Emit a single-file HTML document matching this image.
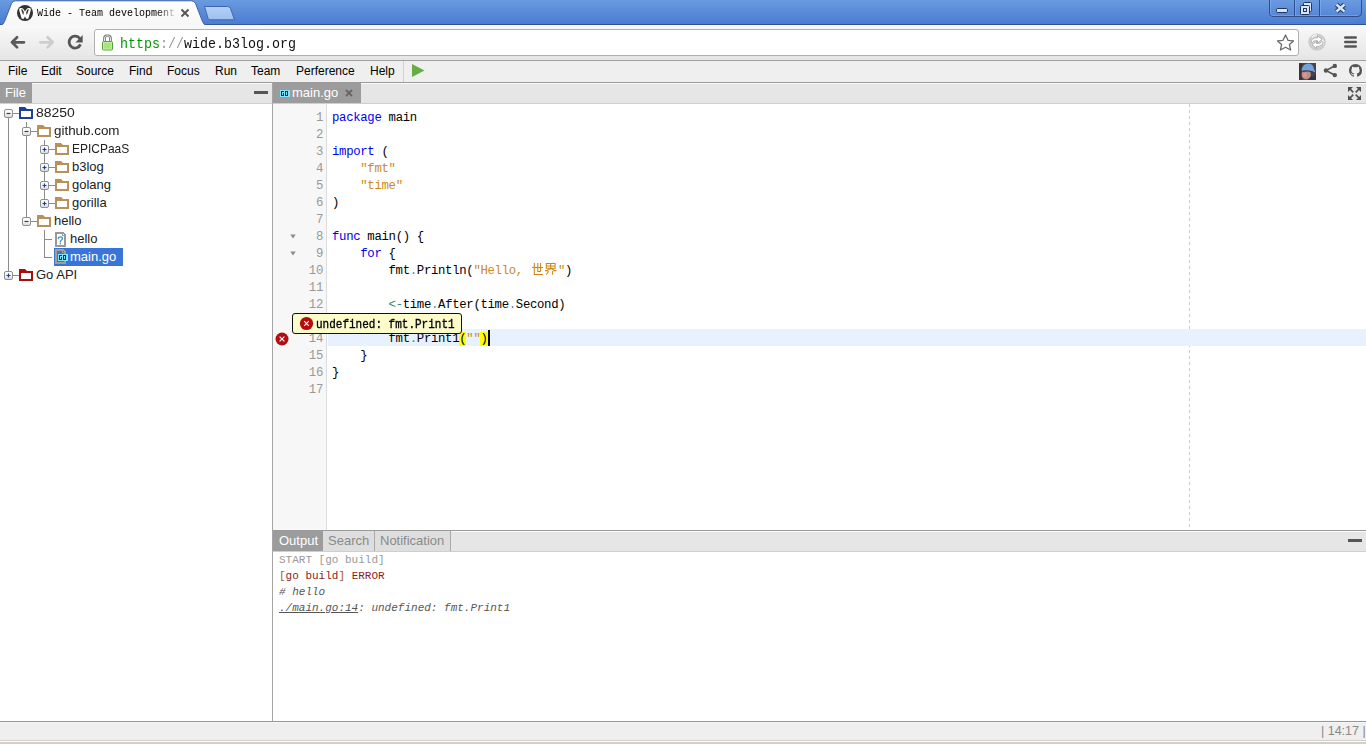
<!DOCTYPE html>
<html><head><meta charset="utf-8">
<style>
*{margin:0;padding:0;box-sizing:border-box}
html,body{width:1366px;height:744px;overflow:hidden;background:#fff;font-family:"Liberation Sans",sans-serif;position:relative}
.a{position:absolute}
#titlebar{left:0;top:0;width:1366px;height:25px;background:linear-gradient(#6a9ae0,#4b7dd2);border-bottom:1px solid #2d5193}
#toolbar{left:0;top:25px;width:1366px;height:36px;background:linear-gradient(#f9f9f9,#e5e5e5);border-bottom:1px solid #a0a0a0}
#omni{left:94px;top:29px;width:1205px;height:27px;background:#fff;border:1px solid #b0b0b0;border-radius:3px}
#menubar{left:0;top:61px;width:1366px;height:21px;background:#efefef}
.mi{top:65px;font-size:12px;color:#000;line-height:13px}
#sidebar{left:0;top:82px;width:272px;height:639px;background:#fff;border-top:1px solid #9b9b9b}
#vsplit{left:272px;top:82px;width:1px;height:640px;background:#a5a5a5}
.hdr{background:#e6e6e6;border-top:1px solid #fafafa;border-bottom:1px solid #cfcfcf}
.tree{font-size:13px;color:#222;line-height:15px}
.code{font-family:"Liberation Mono",monospace;font-size:12.3px;letter-spacing:-0.31px;line-height:17px;white-space:pre}
.ln{font-family:"Liberation Mono",monospace;font-size:12.3px;letter-spacing:-0.31px;line-height:17px;color:#999;text-align:right;width:40px;left:283px}
.kw{color:#0000f0}.st{color:#c98a1a}.dt{color:#3a9a9a}.op{color:#2e8b57}.br{color:#000}.cjk{display:inline-block;width:28px}
.out{font-family:"Liberation Mono",monospace;font-size:11px;line-height:16px;white-space:pre}
#status{left:0;top:721px;width:1366px;height:23px;background:linear-gradient(#979797 0 1px,#f6f6f6 1px 2px,#efefef 2px 19px,#d4d0c8 19px 20px,#fff 20px 21px,#d4d0c8 21px)}
</style></head><body>
<!-- TITLEBAR -->
<div id="titlebar" class="a"></div>
<svg class="a" style="left:0;top:0" width="260" height="26">
 <defs><linearGradient id="tg" x1="0" y1="0" x2="0" y2="1"><stop offset="0" stop-color="#ffffff"/><stop offset="1" stop-color="#f6f6f6"/></linearGradient>
 <linearGradient id="nt" x1="0" y1="0" x2="0" y2="1"><stop offset="0" stop-color="#b3d0f6"/><stop offset="1" stop-color="#9ec0ee"/></linearGradient></defs>
 <path d="M0,25 L1.5,25 Q3.5,24.2 4.5,21.5 L11.5,3.5 Q12.8,0.8 15.5,0.8 L191.5,0.8 Q194.2,0.8 195.5,3.5 L202.5,21.5 Q203.5,24.2 205.5,25 L260,25" fill="url(#tg)" stroke="#3d62a6" stroke-width="1"/>
 <path d="M204.5,6.5 L227.5,6.5 Q229.5,6.5 230.5,8.5 L234.5,19.8 L210,19.8 Q208.6,19.8 208,18.3 Z" fill="url(#nt)" stroke="#3e68b6" stroke-width="1"/>
</svg>
<div class="a" style="left:0;top:25px;width:1366px;height:1px;background:#fff"></div>
<!-- favicon -->
<svg class="a" style="left:16px;top:4px" width="18" height="18" viewBox="0 0 18 18">
 <circle cx="9" cy="9" r="8" fill="#333"/>
 <path d="M3.1,5.8 C3,3.5 6.3,3.3 7.4,5.1 L9,7.4 L10.6,5.1 C11.7,3.3 15,3.5 14.9,5.8 L12.3,14.7 L10.1,14.7 L9,12.3 L7.9,14.7 L5.7,14.7 Z" fill="#fff"/>
 <path d="M5.2,5.7 C5.6,5.1 6.4,5.2 6.8,6 L7.9,8.3 L7.2,11.2 Z M12.8,5.7 C12.4,5.1 11.6,5.2 11.2,6 L10.1,8.3 L10.8,11.2 Z" fill="#333"/>
</svg>
<div class="a" style="left:37px;top:6px;font-family:'Liberation Mono',monospace;font-size:10px;line-height:13px;color:#000;white-space:pre;transform:scaleY(1.15);transform-origin:0 0;-webkit-mask-image:linear-gradient(90deg,#000 120px,transparent 141px);width:142px;overflow:hidden;">Wide - Team development</div>
<svg class="a" style="left:180px;top:8px" width="10" height="10" viewBox="0 0 10 10"><path d="M1.5,1.5 L8.5,8.5 M8.5,1.5 L1.5,8.5" stroke="#555" stroke-width="1.9"/></svg>
<!-- window controls -->
<svg class="a" style="left:1268px;top:0" width="96" height="19" viewBox="0 0 96 19">
 <path d="M1.5,0 L1.5,13 Q1.5,16.5 5,16.5 L90,16.5 Q93.5,16.5 93.5,13 L93.5,0" fill="none" stroke="#2e4f8c" stroke-width="1"/>
 <path d="M2.5,0 L2.5,13 Q2.5,15.5 5,15.5 L90,15.5" fill="none" stroke="#8fb3ea" stroke-width="1" opacity=".5"/>
 <line x1="26.5" y1="0" x2="26.5" y2="16" stroke="#2e4f8c"/>
 <line x1="27.5" y1="0" x2="27.5" y2="16" stroke="#8fb3ea" opacity=".5"/>
 <line x1="51.5" y1="0" x2="51.5" y2="16" stroke="#2e4f8c"/>
 <line x1="52.5" y1="0" x2="52.5" y2="16" stroke="#8fb3ea" opacity=".5"/>
 <rect x="8.5" y="8.5" width="11" height="4" rx="1.2" fill="#d8e4f8" stroke="#1e3560"/>
 <rect x="35.5" y="2.5" width="8" height="9" rx="1" fill="#d8e4f8" stroke="#1e3560"/>
 <rect x="32.5" y="5.5" width="9" height="9" rx="1" fill="#d8e4f8" stroke="#1e3560"/>
 <rect x="35.5" y="8.5" width="3" height="3" fill="#d8e4f8" stroke="#1e3560"/>
 <path d="M68.5,4.5 L76.5,11.5 M76.5,4.5 L68.5,11.5" stroke="#1e3560" stroke-width="4.4"/>
 <path d="M68.5,4.5 L76.5,11.5 M76.5,4.5 L68.5,11.5" stroke="#d8e4f8" stroke-width="2.4"/>
</svg>

<!-- TOOLBAR -->
<div id="toolbar" class="a"></div>
<div id="omni" class="a"></div>
<!-- back/fwd/reload -->
<svg class="a" style="left:9px;top:34px" width="18" height="17" viewBox="0 0 18 17">
 <path d="M15,8.3 L3.2,8.3 M8.1,3.2 L3,8.3 L8.1,13.4" fill="none" stroke="#5a5a5a" stroke-width="2.7" stroke-linecap="round" stroke-linejoin="round"/>
</svg>
<svg class="a" style="left:38px;top:34px" width="18" height="17" viewBox="0 0 18 17">
 <path d="M2.4,8.3 L14.6,8.3 M9.6,3.2 L14.7,8.3 L9.6,13.4" fill="none" stroke="#cdcdcd" stroke-width="2.7" stroke-linecap="round" stroke-linejoin="round"/>
</svg>
<svg class="a" style="left:66px;top:33px" width="19" height="18" viewBox="0 0 19 18">
 <path d="M13.8,5.6 A5.9,5.9 0 1 0 14.5,11.4" fill="none" stroke="#555" stroke-width="2.8"/>
 <path d="M16.7,2 L16.7,9.4 L9.4,9.4 Z" fill="#555"/>
</svg>
<!-- lock -->
<svg class="a" style="left:101px;top:34px" width="14" height="17" viewBox="0 0 14 17">
 <path d="M3.5,7.5 L3.5,4.2 Q3.5,1.8 5.9,1.8 L7.1,1.8 Q9.5,1.8 9.5,4.2 L9.5,7.5" fill="none" stroke="#6a6a6a" stroke-width="2.6"/>
 <path d="M3.5,7.5 L3.5,4.2 Q3.5,1.8 5.9,1.8 L7.1,1.8 Q9.5,1.8 9.5,4.2 L9.5,7.5" fill="none" stroke="#fff" stroke-width="0.9"/>
 <rect x="1.5" y="7.5" width="10" height="8.5" rx="1" fill="#a8e47e" stroke="#5c9e3c"/>
 <rect x="2.5" y="8.5" width="8" height="6.5" fill="none" stroke="#c4f3a4" stroke-width=".8"/>
</svg>
<div class="a" style="left:120px;top:36.5px;font-family:'Liberation Mono',monospace;font-size:13.33px;line-height:14px;white-space:pre;color:#111;transform:scaleY(1.12);transform-origin:0 0"><span style="color:#009900">https</span><span style="color:#999">://</span>wide.b3log.org</div>
<!-- star -->
<svg class="a" style="left:1275px;top:33px" width="21" height="19" viewBox="0 0 21 19">
 <path d="M10.5,2 L13,7.3 L18.5,7.9 L14.4,11.6 L15.6,17 L10.5,14.2 L5.4,17 L6.6,11.6 L2.5,7.9 L8,7.3 Z" fill="#fff" stroke="#6a6a6a" stroke-width="1.3" stroke-linejoin="round"/>
</svg>
<!-- extension -->
<svg class="a" style="left:1307px;top:32px" width="20" height="20" viewBox="0 0 20 20">
 <defs><radialGradient id="eg" cx=".5" cy=".5" r=".55"><stop offset="0" stop-color="#d8d8d8"/><stop offset=".8" stop-color="#cfcfcf"/><stop offset="1" stop-color="#a8a8a8"/></radialGradient></defs>
 <circle cx="10" cy="10" r="8.6" fill="url(#eg)"/>
 <path d="M4.2,5 Q6,2.2 10,2 L10,4 Q7,4.3 5.5,6.5 Z" fill="#f4f4f4" opacity=".8"/>
 <path d="M15.5,6.5 Q17.5,9 16.8,12.5 L14.5,11 Z" fill="#f8f8f8"/>
 <path d="M3.8,10.2 Q4.5,6.2 8.5,5.8 L10.5,5.8 L10.5,3.6 L15,7.4 L10.5,11 L10.5,8.7 L8.5,8.7 Q6.2,8.8 5.2,10.6 Z" fill="#fff" stroke="#9c9c9c" stroke-width=".7" stroke-linejoin="round"/>
 <path d="M16.2,10.2 Q15.5,14 11.5,14.4 L9.5,14.4 L9.5,16.6 L5,12.8 L9.5,9.2 L9.5,11.5 L11.5,11.5 Q13.8,11.4 14.8,9.6 Z" fill="#fff" stroke="#9c9c9c" stroke-width=".7" stroke-linejoin="round"/>
</svg>
<!-- menu -->
<svg class="a" style="left:1342px;top:34px" width="17" height="16" viewBox="0 0 17 16">
 <path d="M3.3,3.5 L13.7,3.5 M3.3,8 L13.7,8 M3.3,12.5 L13.7,12.5" stroke="#555" stroke-width="2.6" stroke-linecap="round"/>
</svg>

<!-- MENUBAR -->
<div id="menubar" class="a"></div>
<div class="a" style="left:0;top:82px;width:1366px;height:1px;background:#9b9b9b"></div>
<div class="a mi" style="left:8px">File</div>
<div class="a mi" style="left:41px">Edit</div>
<div class="a mi" style="left:76px">Source</div>
<div class="a mi" style="left:129px">Find</div>
<div class="a mi" style="left:167px">Focus</div>
<div class="a mi" style="left:215px">Run</div>
<div class="a mi" style="left:251px">Team</div>
<div class="a mi" style="left:296px">Perference</div>
<div class="a mi" style="left:370px">Help</div>
<div class="a" style="left:403px;top:61px;width:1px;height:21px;background:#d0d0d0"></div>
<svg class="a" style="left:411px;top:63px" width="15" height="15" viewBox="0 0 15 15"><path d="M1,1 L13.5,7.5 L1,14 Z" fill="#69ab45"/></svg>
<!-- avatar -->
<svg class="a" style="left:1299px;top:63px" width="17" height="17" viewBox="0 0 17 17">
 <rect width="17" height="17" fill="#4a4244"/>
 <rect x="0" y="0" width="3" height="17" fill="#3a3436"/>
 <path d="M9,17 L17,17 L17,11 Q14,15 9,14 Z" fill="#2e3450"/>
 <ellipse cx="7.2" cy="11.5" rx="4.6" ry="5" fill="#c08c84"/>
 <ellipse cx="6" cy="12" rx="2" ry="2.5" fill="#d6a29a" opacity=".7"/>
 <path d="M2.5,6.5 Q4,0.8 9.5,0.6 Q14,0.8 14.8,5.5 L16.5,9.5 Q11,6.8 3,8.2 Z" fill="#72a2da"/>
 <path d="M2.8,7.8 Q10,6.3 16.3,9.6 L15.5,10 Q10,7.6 4,9 Z" fill="#3c3c4a"/>
</svg>
<!-- share -->
<svg class="a" style="left:1323px;top:63px" width="15" height="15" viewBox="0 0 15 15">
 <path d="M11.5,3 L3,7.5 L11.5,12" fill="none" stroke="#555" stroke-width="1.5"/>
 <circle cx="11.8" cy="2.9" r="2.2" fill="#555"/><circle cx="2.9" cy="7.5" r="2.2" fill="#555"/><circle cx="11.8" cy="12.1" r="2.2" fill="#555"/>
</svg>
<!-- github -->
<svg class="a" style="left:1349px;top:63.5px" width="13" height="13" viewBox="0 0 16 16">
 <path fill="#555" d="M8 0C3.58 0 0 3.58 0 8c0 3.54 2.29 6.53 5.47 7.59.4.07.55-.17.55-.38 0-.19-.01-.82-.01-1.49-2.01.37-2.53-.49-2.69-.94-.09-.23-.48-.94-.82-1.130-.28-.15-.68-.52-.01-.53.63-.01 1.08.58 1.23.82.72 1.21 1.87.87 2.33.66.07-.52.28-.87.51-1.07-1.78-.2-3.64-.89-3.64-3.950 0-.87.31-1.590.82-2.15-.08-.2-.36-1.02.08-2.12 0 0 .67-.21 2.2.82.64-.18 1.32-.27 2-.27.68 0 1.36.09 2 .27 1.53-1.04 2.2-.82 2.2-.82.44 1.1.16 1.92.08 2.12.51.56.82 1.27.82 2.15 0 3.07-1.87 3.75-3.65 3.95.29.25.54.73.54 1.48 0 1.07-.01 1.93-.01 2.2 0 .21.15.46.55.38A8.013 8.013 0 0016 8c0-4.42-3.58-8-8-8z"/>
</svg>

<div id="sidebar" class="a"></div>
<div id="vsplit" class="a"></div>
<!-- sidebar header -->
<div class="a hdr" style="left:0;top:83px;width:272px;height:21px"></div>
<div class="a" style="left:0;top:83px;width:32px;height:20px;background:#9c9c9c"></div>
<div class="a" style="left:5px;top:86px;font-size:13px;line-height:14px;color:#fff">File</div>
<div class="a" style="left:254px;top:91px;width:14px;height:3px;background:#555"></div>
<!-- tree -->
<div class="a" style="left:8px;top:118px;width:1px;height:153px;background:#8c8c8c"></div>
<div class="a" style="left:26px;top:122px;width:1px;height:5px;background:#8c8c8c"></div>
<div class="a" style="left:26px;top:136px;width:1px;height:81px;background:#8c8c8c"></div>
<div class="a" style="left:44px;top:140px;width:1px;height:59px;background:#8c8c8c"></div>
<div class="a" style="left:44px;top:230px;width:1px;height:28px;background:#8c8c8c"></div>
<div class="a" style="left:45px;top:239px;width:7px;height:1px;background:#8c8c8c"></div>
<div class="a" style="left:45px;top:257px;width:7px;height:1px;background:#8c8c8c"></div>
<div class="a" style="left:13px;top:113px;width:6px;height:1px;background:#8c8c8c"></div>
<svg class="a" style="left:4px;top:109px" width="9" height="9" viewBox="0 0 9 9"><defs><linearGradient id="bx" x1="0" y1="0" x2="0" y2="1"><stop offset="0" stop-color="#fff"/><stop offset=".55" stop-color="#f4f4f4"/><stop offset="1" stop-color="#d6d6d6"/></linearGradient></defs><rect x=".5" y=".5" width="8" height="8" rx="1.5" fill="url(#bx)" stroke="#8f8f8f"/><path d="M2.5,4.5 L6.5,4.5" stroke="#1d3f94" stroke-width="1.2"/></svg>
<svg class="a" style="left:19px;top:107px" width="14" height="12" viewBox="0 0 14 12"><path d="M0,0 L6,0 L8,2 L14,2 L14,12 L0,12 Z M2,4 L2,10 L12,10 L12,4 Z" fill="#1b4096" fill-rule="evenodd"/></svg>
<div class="a tree" style="left:36px;top:105px;color:#222;transform:scaleX(1.07);transform-origin:0 0">88250</div>
<div class="a" style="left:31px;top:131px;width:6px;height:1px;background:#8c8c8c"></div>
<svg class="a" style="left:22px;top:127px" width="9" height="9" viewBox="0 0 9 9"><defs><linearGradient id="bx" x1="0" y1="0" x2="0" y2="1"><stop offset="0" stop-color="#fff"/><stop offset=".55" stop-color="#f4f4f4"/><stop offset="1" stop-color="#d6d6d6"/></linearGradient></defs><rect x=".5" y=".5" width="8" height="8" rx="1.5" fill="url(#bx)" stroke="#8f8f8f"/><path d="M2.5,4.5 L6.5,4.5" stroke="#1d3f94" stroke-width="1.2"/></svg>
<svg class="a" style="left:37px;top:125px" width="14" height="12" viewBox="0 0 14 12"><path d="M0,0 L6,0 L8,2 L14,2 L14,12 L0,12 Z M2,4 L2,10 L12,10 L12,4 Z" fill="#b8915a" fill-rule="evenodd"/></svg>
<div class="a tree" style="left:54px;top:123px;color:#222;transform:scaleX(1.03);transform-origin:0 0">github.com</div>
<div class="a" style="left:49px;top:149px;width:6px;height:1px;background:#8c8c8c"></div>
<svg class="a" style="left:40px;top:145px" width="9" height="9" viewBox="0 0 9 9"><defs><linearGradient id="bx" x1="0" y1="0" x2="0" y2="1"><stop offset="0" stop-color="#fff"/><stop offset=".55" stop-color="#f4f4f4"/><stop offset="1" stop-color="#d6d6d6"/></linearGradient></defs><rect x=".5" y=".5" width="8" height="8" rx="1.5" fill="url(#bx)" stroke="#8f8f8f"/><path d="M2.5,4.5 L6.5,4.5 M4.5,2.5 L4.5,6.5" stroke="#1d3f94" stroke-width="1.2"/></svg>
<svg class="a" style="left:55px;top:143px" width="14" height="12" viewBox="0 0 14 12"><path d="M0,0 L6,0 L8,2 L14,2 L14,12 L0,12 Z M2,4 L2,10 L12,10 L12,4 Z" fill="#b8915a" fill-rule="evenodd"/></svg>
<div class="a tree" style="left:72px;top:141px;color:#222;transform:scaleX(0.92);transform-origin:0 0">EPICPaaS</div>
<div class="a" style="left:49px;top:167px;width:6px;height:1px;background:#8c8c8c"></div>
<svg class="a" style="left:40px;top:163px" width="9" height="9" viewBox="0 0 9 9"><defs><linearGradient id="bx" x1="0" y1="0" x2="0" y2="1"><stop offset="0" stop-color="#fff"/><stop offset=".55" stop-color="#f4f4f4"/><stop offset="1" stop-color="#d6d6d6"/></linearGradient></defs><rect x=".5" y=".5" width="8" height="8" rx="1.5" fill="url(#bx)" stroke="#8f8f8f"/><path d="M2.5,4.5 L6.5,4.5 M4.5,2.5 L4.5,6.5" stroke="#1d3f94" stroke-width="1.2"/></svg>
<svg class="a" style="left:55px;top:161px" width="14" height="12" viewBox="0 0 14 12"><path d="M0,0 L6,0 L8,2 L14,2 L14,12 L0,12 Z M2,4 L2,10 L12,10 L12,4 Z" fill="#b8915a" fill-rule="evenodd"/></svg>
<div class="a tree" style="left:72px;top:159px;color:#222">b3log</div>
<div class="a" style="left:49px;top:185px;width:6px;height:1px;background:#8c8c8c"></div>
<svg class="a" style="left:40px;top:181px" width="9" height="9" viewBox="0 0 9 9"><defs><linearGradient id="bx" x1="0" y1="0" x2="0" y2="1"><stop offset="0" stop-color="#fff"/><stop offset=".55" stop-color="#f4f4f4"/><stop offset="1" stop-color="#d6d6d6"/></linearGradient></defs><rect x=".5" y=".5" width="8" height="8" rx="1.5" fill="url(#bx)" stroke="#8f8f8f"/><path d="M2.5,4.5 L6.5,4.5 M4.5,2.5 L4.5,6.5" stroke="#1d3f94" stroke-width="1.2"/></svg>
<svg class="a" style="left:55px;top:179px" width="14" height="12" viewBox="0 0 14 12"><path d="M0,0 L6,0 L8,2 L14,2 L14,12 L0,12 Z M2,4 L2,10 L12,10 L12,4 Z" fill="#b8915a" fill-rule="evenodd"/></svg>
<div class="a tree" style="left:72px;top:177px;color:#222">golang</div>
<div class="a" style="left:49px;top:203px;width:6px;height:1px;background:#8c8c8c"></div>
<svg class="a" style="left:40px;top:199px" width="9" height="9" viewBox="0 0 9 9"><defs><linearGradient id="bx" x1="0" y1="0" x2="0" y2="1"><stop offset="0" stop-color="#fff"/><stop offset=".55" stop-color="#f4f4f4"/><stop offset="1" stop-color="#d6d6d6"/></linearGradient></defs><rect x=".5" y=".5" width="8" height="8" rx="1.5" fill="url(#bx)" stroke="#8f8f8f"/><path d="M2.5,4.5 L6.5,4.5 M4.5,2.5 L4.5,6.5" stroke="#1d3f94" stroke-width="1.2"/></svg>
<svg class="a" style="left:55px;top:197px" width="14" height="12" viewBox="0 0 14 12"><path d="M0,0 L6,0 L8,2 L14,2 L14,12 L0,12 Z M2,4 L2,10 L12,10 L12,4 Z" fill="#b8915a" fill-rule="evenodd"/></svg>
<div class="a tree" style="left:72px;top:195px;color:#222">gorilla</div>
<div class="a" style="left:31px;top:221px;width:6px;height:1px;background:#8c8c8c"></div>
<svg class="a" style="left:22px;top:217px" width="9" height="9" viewBox="0 0 9 9"><defs><linearGradient id="bx" x1="0" y1="0" x2="0" y2="1"><stop offset="0" stop-color="#fff"/><stop offset=".55" stop-color="#f4f4f4"/><stop offset="1" stop-color="#d6d6d6"/></linearGradient></defs><rect x=".5" y=".5" width="8" height="8" rx="1.5" fill="url(#bx)" stroke="#8f8f8f"/><path d="M2.5,4.5 L6.5,4.5" stroke="#1d3f94" stroke-width="1.2"/></svg>
<svg class="a" style="left:37px;top:215px" width="14" height="12" viewBox="0 0 14 12"><path d="M0,0 L6,0 L8,2 L14,2 L14,12 L0,12 Z M2,4 L2,10 L12,10 L12,4 Z" fill="#b8915a" fill-rule="evenodd"/></svg>
<div class="a tree" style="left:54px;top:213px;color:#222">hello</div>
<div class="a" style="left:13px;top:275px;width:6px;height:1px;background:#8c8c8c"></div>
<svg class="a" style="left:4px;top:271px" width="9" height="9" viewBox="0 0 9 9"><defs><linearGradient id="bx" x1="0" y1="0" x2="0" y2="1"><stop offset="0" stop-color="#fff"/><stop offset=".55" stop-color="#f4f4f4"/><stop offset="1" stop-color="#d6d6d6"/></linearGradient></defs><rect x=".5" y=".5" width="8" height="8" rx="1.5" fill="url(#bx)" stroke="#8f8f8f"/><path d="M2.5,4.5 L6.5,4.5 M4.5,2.5 L4.5,6.5" stroke="#1d3f94" stroke-width="1.2"/></svg>
<svg class="a" style="left:19px;top:269px" width="14" height="12" viewBox="0 0 14 12"><path d="M0,0 L6,0 L8,2 L14,2 L14,12 L0,12 Z M2,4 L2,10 L12,10 L12,4 Z" fill="#a50f0f" fill-rule="evenodd"/></svg>
<div class="a tree" style="left:36px;top:267px;color:#222">Go API</div>
<svg class="a" style="left:55px;top:232px" width="11" height="15" viewBox="0 0 11 15" shape-rendering="crispEdges"><path d="M0,0 L8,0 L11,3 L11,15 L0,15 Z" fill="#999"/><path d="M2,2 L7,2 L7,4 L9,4 L9,13 L2,13 Z" fill="#fff"/><rect x="8" y="2" width="1" height="1" fill="#fff"/></svg>
<svg class="a" style="left:57px;top:236px" width="7" height="9" viewBox="0 0 7 9"><path d="M1.2,2.6 Q1.3,0.8 3.3,0.8 Q5.4,0.8 5.4,2.5 Q5.4,3.6 4.2,4.3 Q3.3,4.9 3.3,5.9" fill="none" stroke="#3a8fc8" stroke-width="1.25" stroke-linecap="round"/><circle cx="3.3" cy="7.8" r=".8" fill="#3a8fc8"/></svg>
<div class="a" style="left:54px;top:248px;width:69px;height:18px;background:#3875d7"></div>
<svg class="a" style="left:55px;top:249px" width="11" height="15" viewBox="0 0 11 15" shape-rendering="crispEdges"><path d="M0,0 L8,0 L11,3 L11,15 L0,15 Z" fill="#a69c92"/><path d="M2,2 L7,2 L7,4 L9,4 L9,13 L2,13 Z" fill="#3875d7"/><rect x="8" y="2" width="1" height="1" fill="#3875d7"/></svg>
<svg class="a" style="left:58px;top:254px" width="10" height="7" viewBox="0 0 10 7" shape-rendering="crispEdges"><rect width="10" height="7" fill="#80e4fd"/><g fill="#2b2b2b"><rect x="1" y="1" width="1" height="1"/><rect x="2" y="1" width="1" height="1"/><rect x="3" y="1" width="1" height="1"/><rect x="5" y="1" width="1" height="1"/><rect x="6" y="1" width="1" height="1"/><rect x="7" y="1" width="1" height="1"/><rect x="1" y="2" width="1" height="1"/><rect x="5" y="2" width="1" height="1"/><rect x="7" y="2" width="1" height="1"/><rect x="1" y="3" width="1" height="1"/><rect x="3" y="3" width="1" height="1"/><rect x="5" y="3" width="1" height="1"/><rect x="7" y="3" width="1" height="1"/><rect x="1" y="4" width="1" height="1"/><rect x="3" y="4" width="1" height="1"/><rect x="5" y="4" width="1" height="1"/><rect x="7" y="4" width="1" height="1"/><rect x="1" y="5" width="1" height="1"/><rect x="2" y="5" width="1" height="1"/><rect x="3" y="5" width="1" height="1"/><rect x="5" y="5" width="1" height="1"/><rect x="6" y="5" width="1" height="1"/><rect x="7" y="5" width="1" height="1"/></g></svg>
<div class="a tree" style="left:70px;top:231px;color:#222">hello</div>
<div class="a tree" style="left:70px;top:249px;color:#fff">main.go</div>
<!-- editor header -->
<div class="a hdr" style="left:273px;top:83px;width:1093px;height:21px"></div>
<div class="a" style="left:273px;top:83px;width:88px;height:20px;background:#9c9c9c"></div>
<svg class="a" style="left:280px;top:90px" width="10" height="7" viewBox="0 0 10 7" shape-rendering="crispEdges"><rect width="10" height="7" fill="#80e4fd"/><g fill="#2b2b2b"><rect x="1" y="1" width="1" height="1"/><rect x="2" y="1" width="1" height="1"/><rect x="3" y="1" width="1" height="1"/><rect x="5" y="1" width="1" height="1"/><rect x="6" y="1" width="1" height="1"/><rect x="7" y="1" width="1" height="1"/><rect x="1" y="2" width="1" height="1"/><rect x="5" y="2" width="1" height="1"/><rect x="7" y="2" width="1" height="1"/><rect x="1" y="3" width="1" height="1"/><rect x="3" y="3" width="1" height="1"/><rect x="5" y="3" width="1" height="1"/><rect x="7" y="3" width="1" height="1"/><rect x="1" y="4" width="1" height="1"/><rect x="3" y="4" width="1" height="1"/><rect x="5" y="4" width="1" height="1"/><rect x="7" y="4" width="1" height="1"/><rect x="1" y="5" width="1" height="1"/><rect x="2" y="5" width="1" height="1"/><rect x="3" y="5" width="1" height="1"/><rect x="5" y="5" width="1" height="1"/><rect x="6" y="5" width="1" height="1"/><rect x="7" y="5" width="1" height="1"/></g></svg>
<div class="a" style="left:292px;top:86px;font-size:13px;line-height:14px;color:#fff">main.go</div>
<svg class="a" style="left:345px;top:89px" width="8" height="8" viewBox="0 0 8 8"><path d="M1,1 L7,7 M7,1 L1,7" stroke="#666" stroke-width="1.8"/></svg>
<svg class="a" style="left:1347px;top:86px" width="15" height="15" viewBox="0 0 15 15" fill="#505050">
 <path d="M1,1 L6,1 L1,6 Z M14,1 L9,1 L14,6 Z M1,14 L6,14 L1,9 Z M14,14 L9,14 L14,9 Z"/>
 <path d="M2.5,2.5 L6.3,6.3 M12.5,2.5 L8.7,6.3 M2.5,12.5 L6.3,8.7 M12.5,12.5 L8.7,8.7" stroke="#505050" stroke-width="1.7"/>
</svg>
<!-- editor -->
<div class="a" style="left:273px;top:104px;width:54px;height:426px;background:#f7f7f7;border-right:1px solid #dcdcdc"></div>
<div class="a" style="left:1189px;top:104px;width:1px;height:426px;background:repeating-linear-gradient(#c8c8c8 0 3px,transparent 3px 6px)"></div>
<div class="a" style="left:328px;top:329px;width:1038px;height:17px;background:#e8f2ff"></div>
<div class="a" style="left:480px;top:332px;width:8px;height:14px;background:#ffff00"></div>
<div class="a" style="left:459px;top:332px;width:7px;height:14px;background:#ffff00"></div>
<div class="a ln" style="top:110px">1</div>
<div class="a code" style="left:332px;top:110px"><span class="kw">package</span> main</div>
<div class="a ln" style="top:127px">2</div>
<div class="a ln" style="top:144px">3</div>
<div class="a code" style="left:332px;top:144px"><span class="kw">import</span> (</div>
<div class="a ln" style="top:161px">4</div>
<div class="a code" style="left:332px;top:161px">    <span class="st">"fmt"</span></div>
<div class="a ln" style="top:178px">5</div>
<div class="a code" style="left:332px;top:178px">    <span class="st">"time"</span></div>
<div class="a ln" style="top:195px">6</div>
<div class="a code" style="left:332px;top:195px">)</div>
<div class="a ln" style="top:212px">7</div>
<div class="a ln" style="top:229px">8</div>
<div class="a code" style="left:332px;top:229px"><span class="kw">func</span> main() {</div>
<div class="a ln" style="top:246px">9</div>
<div class="a code" style="left:332px;top:246px">    <span class="kw">for</span> {</div>
<div class="a ln" style="top:263px">10</div>
<div class="a code" style="left:332px;top:263px">        fmt<span class="dt">.</span>Println(<span class="st">"Hello, <span class='cjk'></span>"</span>)</div>
<div class="a ln" style="top:280px">11</div>
<div class="a ln" style="top:297px">12</div>
<div class="a code" style="left:332px;top:297px">        <span class="op">&lt;-</span>time<span class="dt">.</span>After(time<span class="dt">.</span>Second)</div>
<div class="a ln" style="top:314px">13</div>
<div class="a ln" style="top:331px">14</div>
<div class="a code" style="left:332px;top:331px">        fmt<span class="dt">.</span>Print1<span class="br">(</span><span class="st">""</span><span class="br">)</span></div>
<div class="a ln" style="top:348px">15</div>
<div class="a code" style="left:332px;top:348px">    }</div>
<div class="a ln" style="top:365px">16</div>
<div class="a code" style="left:332px;top:365px">}</div>
<div class="a ln" style="top:382px">17</div>
<svg class="a" style="left:290px;top:234px" width="6" height="5" viewBox="0 0 6 5"><path d="M0.3,0.5 L5.7,0.5 L3,4.5 Z" fill="#8a8a8a"/></svg>
<svg class="a" style="left:290px;top:251px" width="6" height="5" viewBox="0 0 6 5"><path d="M0.3,0.5 L5.7,0.5 L3,4.5 Z" fill="#8a8a8a"/></svg>
<svg class="a" style="left:530px;top:262px" width="28" height="14" viewBox="0 0 28 14" fill="none" stroke="#d08510" stroke-width="1.05"><path d="M2,5.5 L13,5.5 M4.3,1 L4.3,12.5 L13,12.5 M7.8,1 L7.8,9.5 L10.6,9.5 M10.6,1 L10.6,9.5"/><path d="M16.3,1.5 L25.1,1.5 L25.1,6.3 L16.3,6.3 Z M20.7,1.5 L20.7,6.3 M16.3,3.9 L25.1,3.9 M20.7,6.5 L16.5,8.6 M20.7,6.5 L24.9,8.6 M15,8.6 L18.2,8.6 M23.2,8.6 L26.4,8.6 M18.4,9 Q18.2,11 16.2,12.6 M22.6,9 L22.6,12.8"/></svg>
<div class="a" style="left:488px;top:330px;width:2px;height:16px;background:#000"></div>
<svg class="a" style="left:275px;top:332px" width="14" height="14" viewBox="0 0 14 14"><circle cx="7" cy="7" r="6.5" fill="#b30d0d"/><path d="M4.6,4.6 L9.4,9.4 M9.4,4.6 L4.6,9.4" stroke="#fff" stroke-width="1.2"/></svg>
<div class="a" style="left:292px;top:313px;width:170px;height:21px;background:#fcfccb;border:1px solid #111;border-radius:3px"></div>
<svg class="a" style="left:299px;top:316px" width="15" height="15" viewBox="0 0 15 15"><circle cx="7.5" cy="7.5" r="6.6" fill="#b30d0d"/><path d="M5.2,5.2 L9.8,9.8 M9.8,5.2 L5.2,9.8" stroke="#fff" stroke-width="1.1"/></svg>
<div class="a" style="left:316px;top:317px;font-family:'Liberation Mono',monospace;font-size:11px;line-height:12px;white-space:pre;color:#000;-webkit-text-stroke:0.3px #000;transform:scaleY(1.2);transform-origin:0 0">undefined: fmt.Print1</div>
<!-- bottom panel -->
<div class="a" style="left:273px;top:530px;width:1093px;height:1px;background:#9b9b9b"></div>
<div class="a hdr" style="left:273px;top:531px;width:1093px;height:21px"></div>
<div class="a" style="left:273px;top:531px;width:50px;height:20px;background:#9c9c9c"></div>
<div class="a" style="left:323px;top:531px;width:52px;height:20px;background:#dedede;border-right:1px solid #aaa"></div>
<div class="a" style="left:375px;top:531px;width:76px;height:20px;background:#dedede;border-right:1px solid #aaa"></div>
<div class="a" style="left:279px;top:534px;font-size:13px;line-height:14px;color:#fff">Output</div>
<div class="a" style="left:328px;top:534px;font-size:13px;line-height:14px;color:#8a8a8a">Search</div>
<div class="a" style="left:380px;top:534px;font-size:13px;line-height:14px;color:#8a8a8a">Notification</div>
<div class="a" style="left:1348px;top:539px;width:14px;height:3px;background:#555"></div>
<div class="a out" style="left:279px;top:552px;color:#999">START [go build]</div>
<div class="a out" style="left:279px;top:568px;color:#8e1b1b"><span style="color:#a0601c">[</span>go build<span style="color:#a0601c">]</span> ERROR</div>
<div class="a out" style="left:279px;top:584px;color:#555;font-style:italic"># hello</div>
<div class="a out" style="left:279px;top:600px;color:#555;font-style:italic"><span style="text-decoration:underline">./main.go:14</span>: undefined: fmt.Print1</div>

<div id="status" class="a"></div>
<div class="a" style="left:1321px;top:724px;font-size:12.5px;line-height:14px;color:#888;white-space:pre">| 14:17 |</div>
</body></html>
